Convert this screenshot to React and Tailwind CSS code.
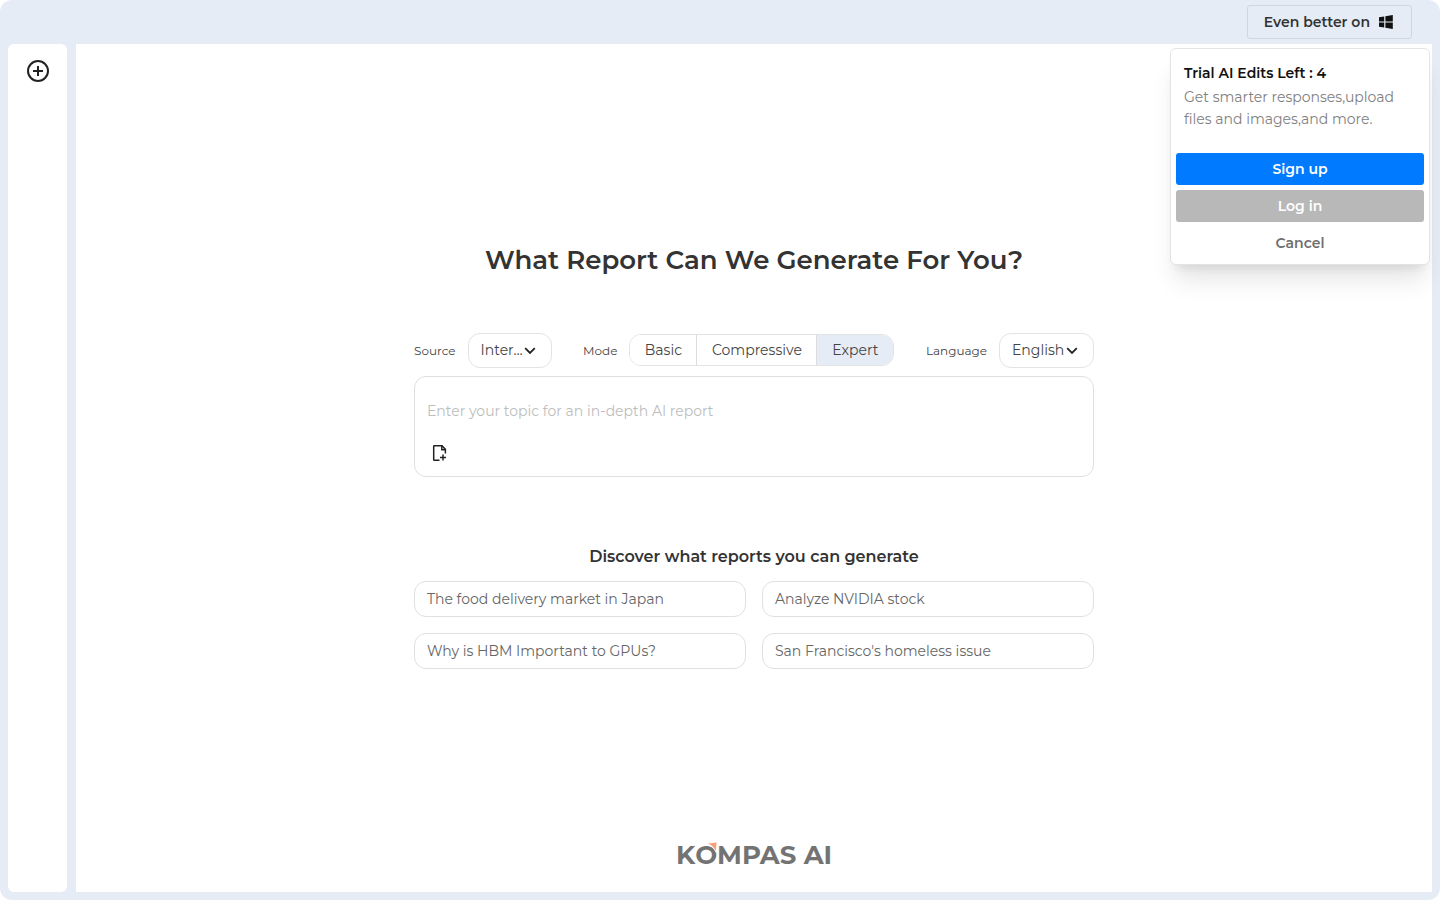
import { useState } from 'react';

const MODES = [
  { value: 'basic',       label: 'Basic',       width: 'w-[67px]' },
  { value: 'compressive', label: 'Compressive', width: 'w-[120px]' },
  { value: 'expert',      label: 'Expert',      width: 'w-[76px]' },
];

const SUGGESTIONS = [
  'The food delivery market in Japan',
  'Analyze NVIDIA stock',
  'Why is HBM Important to GPUs?',
  "San Francisco's homeless issue",
];

function WindowsIcon() {
  return (
    <svg width="14" height="14" viewBox="0 0 14 14" fill="#111">
      <path d="M0 2.2 5.2 1.4v5H0zM6.4 1.2 13.8 0v6.4H6.4zM0 7.6h5.2v5L0 11.8zM6.4 7.6h7.4V14L6.4 12.8z" />
    </svg>
  );
}

function Chevron() {
  return (
    <svg className="absolute right-4 top-[14px] pointer-events-none" width="12" height="8" viewBox="0 0 12 8" fill="none" stroke="#222" strokeWidth="1.8">
      <path d="M1.2 1.2 6 6l4.8-4.8" />
    </svg>
  );
}

function Picker({ id, label, options, width }) {
  return (
    <div className="flex items-center gap-3">
      <label htmlFor={id} className="text-xs text-[#444]">{label}</label>
      <div className={`relative ${width}`}>
        <select
          id={id}
          className="appearance-none w-full h-[35px] rounded-xl border border-[#e3e3e3] bg-white pl-3 pr-[26px] pb-[2px] text-sm text-[#444] truncate"
        >
          {options.map(o => <option key={o}>{o}</option>)}
        </select>
        <Chevron />
      </div>
    </div>
  );
}

function ModeSwitch() {
  const [mode, setMode] = useState('expert');

  return (
    <div className="flex items-center gap-3">
      <span id="mode-label" className="text-xs text-[#444]">Mode</span>
      <div role="group" aria-labelledby="mode-label" className="flex h-8 mb-px rounded-xl border border-[#e3e3e3] divide-x divide-[#dcdcdc] overflow-hidden">
        {MODES.map(m => (
          <button
            key={m.value}
            onClick={() => setMode(m.value)}
            aria-pressed={mode === m.value}
            className={`${m.width} text-sm text-[#444] ${mode === m.value ? 'bg-[#e5ecf6]' : 'bg-white'}`}
          >
            {m.label}
          </button>
        ))}
      </div>
    </div>
  );
}

function TopicBox() {
  const [topic, setTopic] = useState('');

  return (
    <div className="mt-2 h-[101px] rounded-xl border border-[#e0e0e0] px-3 pt-[22px] pb-[11px] flex flex-col justify-between">
      <input
        aria-label="Topic"
        className="w-full h-6 text-sm text-[#444] placeholder:text-[#bdbdbd] outline-none"
        placeholder="Enter your topic for an in-depth AI report"
        value={topic}
        onChange={e => setTopic(e.target.value)}
      />
      <button aria-label="Attach file" className="w-6 h-6 flex items-center justify-center">
        <svg width="16" height="18" viewBox="0 0 16 18" fill="none" stroke="#222" strokeWidth="1.5">
          <path d="M8.5 16.2H3.2a.5.5 0 0 1-.5-.5V2.3a.5.5 0 0 1 .5-.5h7.8l3.4 3.6v4.2" />
          <path d="M10.8 1.8v4h3.6" />
          <path d="M12 10.4v6M9 13.4h6" />
        </svg>
      </button>
    </div>
  );
}

function TrialPopup({ onClose }) {
  return (
    <div className="absolute top-12 right-[10px] w-[260px] rounded-md border border-[#e3e3e3] bg-white p-[5px] shadow-xl">
      <div className="px-2 pt-2">
        <p className="text-sm leading-[22px] font-semibold text-[#111]">Trial AI Edits Left : 4</p>
        <p className="mt-[2px] text-sm leading-[22px] text-[#808080]">Get smarter responses,upload files and images,and more.</p>
      </div>
      <div className="mt-[23px] flex flex-col gap-[5px] text-sm font-semibold">
        <button className="h-8 rounded-[3px] bg-[#007bff] text-white">Sign up</button>
        <button className="h-8 rounded-[3px] bg-[#b8b8b8] text-white">Log in</button>
        <button onClick={onClose} className="h-8 text-[#6f6f6f]">Cancel</button>
      </div>
    </div>
  );
}

function Logo() {
  return (
    <div className="flex text-[26px] leading-7 font-bold text-[#737373]">
      <span>K</span>
      <span className="relative">
        O
        <svg className="absolute right-0 top-px" width="10" height="10" viewBox="0 0 10 10">
          <path d="M1 1.6 9.6 .6 8.8 9Q6 3.6 1 1.6Z" fill="#ff9b78" stroke="#fff" strokeWidth="1.6" paintOrder="stroke" />
        </svg>
      </span>
      <span>MPAS AI</span>
    </div>
  );
}

export default function App() {
  const [showTrial, setShowTrial] = useState(true);

  return (
    <div className="relative min-h-screen flex flex-col rounded-xl bg-[#e5ecf6] font-[Montserrat,Inter,sans-serif]">
      <header className="h-11 flex items-center justify-end pr-7">
        <button className="h-[34px] flex items-center gap-[9px] rounded-[3px] border border-[#cfd6e0] pl-4 pr-[18px] text-sm font-semibold text-[#333]">
          Even better on
          <WindowsIcon />
        </button>
      </header>

      <div className="flex-1 flex gap-[9px] px-2 pb-2">
        <aside className="w-[59px] rounded-md bg-white pt-4 flex flex-col items-center">
          <button aria-label="New report">
            <svg width="22" height="22" viewBox="0 0 22 22" fill="none" stroke="#222" strokeWidth="2">
              <circle cx="11" cy="11" r="10" />
              <path d="M11 6v10M6 11h10" />
            </svg>
          </button>
        </aside>

        <main className="flex-1 flex flex-col items-center bg-white">
          <div className="flex-1 w-full max-w-[680px] pt-[26px] flex flex-col justify-center">
            <h1 className="text-center text-[26px] leading-9 font-semibold text-[#333]">What Report Can We Generate For You?</h1>

            <div className="mt-[55px] flex items-center justify-between">
              <Picker id="source" label="Source" options={['Internet', 'Files']} width="w-[84px]" />
              <ModeSwitch />
              <Picker id="language" label="Language" options={['English', 'Japanese', 'Korean']} width="w-[95px]" />
            </div>
            <TopicBox />

            <h2 className="mt-[68px] text-center text-base leading-6 font-semibold text-[#333]">Discover what reports you can generate</h2>
            <div className="mt-3 grid grid-cols-2 gap-4">
              {SUGGESTIONS.map(s => (
                <button key={s} className="h-9 rounded-xl border border-[#e0e0e0] px-3 text-left text-sm text-[#666]">
                  {s}
                </button>
              ))}
            </div>
          </div>

          <footer className="pb-[23px]">
            <Logo />
          </footer>
        </main>
      </div>

      {showTrial && <TrialPopup onClose={() => setShowTrial(false)} />}
    </div>
  );
}
